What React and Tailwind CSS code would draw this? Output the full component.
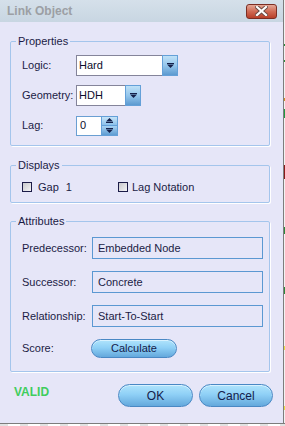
import React from "react";

const TXT = "text-[#1b1b45]";

function DownGlyph() {
  return (
    <svg width="7" height="5" viewBox="0 0 7 5" className="block">
      <rect x="0" y="0" width="7" height="1" fill="#15204a" />
      <path d="M0 1.5 H7 L3.5 5 Z" fill="#15204a" />
    </svg>
  );
}

function UpGlyph() {
  return (
    <svg width="7" height="5" viewBox="0 0 7 5" className="block">
      <path d="M0 3.5 H7 L3.5 0 Z" fill="#15204a" />
      <rect x="0" y="4" width="7" height="1" fill="#15204a" />
    </svg>
  );
}

function Combo({ value, width }) {
  return (
    <div className={`flex h-[21px] ${width}`}>
      <div className="flex-1 flex items-center bg-white border border-r-0 border-[#84849a] pl-[2px] text-[11px] text-[#0c0c2c]">
        {value}
      </div>
      <div className="w-[16px] flex items-center justify-center border border-[#64a0d8] bg-[linear-gradient(to_bottom,#bfe1f7,#94c6ec_50%,#5c9ad0)]">
        <DownGlyph />
      </div>
    </div>
  );
}

function Checkbox() {
  return (
    <div className="w-[10px] h-[10px] border border-[#1c1c48] bg-[linear-gradient(135deg,#c8c8cc,#f4f4f6)]" />
  );
}

function PillButton({ children, className }) {
  return (
    <div
      className={`flex items-center justify-center rounded-full border border-[#4a88c4] bg-[linear-gradient(to_bottom,#b0e4fc,#8fd0f6_45%,#64a8dc)] shadow-[inset_0_1px_0_#d8f2ff] text-[11px] text-[#14204a] ${className}`}
    >
      {children}
    </div>
  );
}

function Field({ label, value }) {
  return (
    <div className="flex items-center h-[22px]">
      <div className={`w-[70px] text-[11px] ${TXT}`}>{label}</div>
      <div className={`w-[171px] h-[22px] flex items-center border border-[#5b98d2] pl-[5px] text-[11px] ${TXT}`}>
        {value}
      </div>
    </div>
  );
}

export default function App() {
  return (
    <div className="w-[285px] h-[426px] flex flex-col bg-white font-['Liberation_Sans',Arial,sans-serif] overflow-hidden">
      <div className="flex h-[423px]">
        <div className="w-[283px] h-[423px] flex flex-col bg-[#e6e6f8]">
          {/* title bar */}
          <div className="h-[22px] flex items-center justify-between pl-[7px] pr-[6px] bg-[linear-gradient(to_bottom,#d5e0ea,#c8d6e2)]">
            <span className="text-[12px] font-bold text-[#9c9fa4] leading-none">Link Object</span>
            <div className="w-[31px] h-[15px] rounded-[3px] border border-[#7c2e24] bg-[linear-gradient(to_bottom,#e4a898,#d06a54_50%,#b8402a)] flex items-center justify-center">
              <svg width="13" height="10" viewBox="0 0 13 10">
                <path d="M2 1 L11 9 M11 1 L2 9" stroke="#6a4a44" strokeWidth="4" strokeLinecap="square" />
                <path d="M2 1 L11 9 M11 1 L2 9" stroke="#ffffff" strokeWidth="2.2" strokeLinecap="square" />
              </svg>
            </div>
          </div>

          {/* body */}
          <div className="flex-1 flex flex-col px-[10px] pt-[12px]">
            {/* Properties */}
            <fieldset className="w-[260px] border border-[#a4c5ec] rounded-[2px] shadow-[1px_1px_0_#ffffff] px-[5px] pt-[7px] pb-[9px]">
              <legend className={`px-[2px] text-[11px] leading-[14px] ${TXT}`}>Properties</legend>
              <div className="flex flex-col gap-[9px] pl-[6px]">
                <div className="flex items-center h-[21px]">
                  <div className={`w-[54px] text-[11px] ${TXT}`}>Logic:</div>
                  <Combo value="Hard" width="w-[102px]" />
                </div>
                <div className="flex items-center h-[21px]">
                  <div className={`w-[54px] text-[11px] ${TXT}`}>Geometry:</div>
                  <Combo value="HDH" width="w-[65px]" />
                </div>
                <div className="flex items-center h-[21px]">
                  <div className={`w-[54px] text-[11px] ${TXT}`}>Lag:</div>
                  <div className="flex h-[20px]">
                    <div className="w-[25px] flex items-center bg-white border border-r-0 border-[#6a9fd2] pl-[3px] text-[11px] text-[#0c0c2c]">
                      0
                    </div>
                    <div className="w-[17px] flex flex-col">
                      <div className="h-[10px] flex items-center justify-center border border-[#64a0d8] bg-[linear-gradient(to_bottom,#c6e4f8,#8cc0ea)]">
                        <UpGlyph />
                      </div>
                      <div className="h-[10px] flex items-center justify-center border border-t-0 border-[#64a0d8] bg-[linear-gradient(to_bottom,#a8d2f2,#5e9cd2)]">
                        <DownGlyph />
                      </div>
                    </div>
                  </div>
                </div>
              </div>
            </fieldset>

            {/* Displays */}
            <fieldset className="mt-[12px] w-[260px] border border-[#a4c5ec] rounded-[2px] shadow-[1px_1px_0_#ffffff] px-[5px] pt-[8px] pb-[8px]">
              <legend className={`px-[2px] text-[11px] leading-[14px] ${TXT}`}>Displays</legend>
              <div className="flex items-center h-[14px] pl-[6px]">
                <Checkbox />
                <span className={`ml-[6px] text-[11px] ${TXT}`}>Gap</span>
                <span className={`ml-[7px] text-[11px] ${TXT}`}>1</span>
                <div className="ml-[46px] flex items-center">
                  <Checkbox />
                  <span className={`ml-[4px] text-[11px] ${TXT}`}>Lag Notation</span>
                </div>
              </div>
            </fieldset>

            {/* Attributes */}
            <fieldset className="mt-[11px] w-[260px] border border-[#a4c5ec] rounded-[2px] shadow-[1px_1px_0_#ffffff] px-[5px] pt-[9px] pb-[13px]">
              <legend className={`px-[2px] text-[11px] leading-[14px] ${TXT}`}>Attributes</legend>
              <div className="flex flex-col gap-[12px] pl-[6px]">
                <Field label="Predecessor:" value="Embedded Node" />
                <Field label="Successor:" value="Concrete" />
                <Field label="Relationship:" value="Start-To-Start" />
                <div className="flex items-center h-[19px]">
                  <div className={`w-[69px] text-[11px] ${TXT}`}>Score:</div>
                  <PillButton className="w-[86px] h-[19px]">Calculate</PillButton>
                </div>
              </div>
            </fieldset>

            {/* footer */}
            <div className="mt-[12px] flex items-start pl-[4px]">
              <span className="mt-[1px] text-[12px] font-bold text-[#3fcd5e] leading-[14px]">VALID</span>
              <div className="ml-auto flex gap-[6px]">
                <PillButton className="w-[75px] h-[23px] text-[12px]">OK</PillButton>
                <PillButton className="w-[74px] h-[23px] text-[12px]">Cancel</PillButton>
              </div>
            </div>
          </div>
        </div>
        <div className="w-px bg-[#7d7d7d]" />
        <div className="w-px flex flex-col bg-[#f2f2f2]">
          <div className="h-[44px]" />
          <div className="h-[2px] bg-[#2a8a3a]" />
          <div className="h-[14px]" />
          <div className="h-[2px] bg-[#2a8a3a]" />
          <div className="h-[36px]" />
          <div className="h-[3px] bg-[#d08a20]" />
          <div className="h-[8px]" />
          <div className="h-[9px] bg-[#1f9a40]" />
          <div className="h-[47px]" />
          <div className="h-[14px] bg-[#8a1a1a]" />
          <div className="h-[48px]" />
          <div className="h-[7px] bg-[#2a8a3a]" />
          <div className="h-[53px]" />
          <div className="h-[7px] bg-[#2a8a3a]" />
          <div className="h-[52px]" />
          <div className="h-[4px] bg-[#e8e040]" />
          <div className="h-[56px]" />
          <div className="h-[4px] bg-[#e8e040]" />
        </div>
      </div>
      <div className="h-px w-[285px] bg-[#7d7d7d]" />
      <div className="h-[2px] w-[285px] bg-[repeating-linear-gradient(to_right,#e2e2e2_0px,#e2e2e2_8px,#ffffff_8px,#ffffff_20px)]" />
    </div>
  );
}
